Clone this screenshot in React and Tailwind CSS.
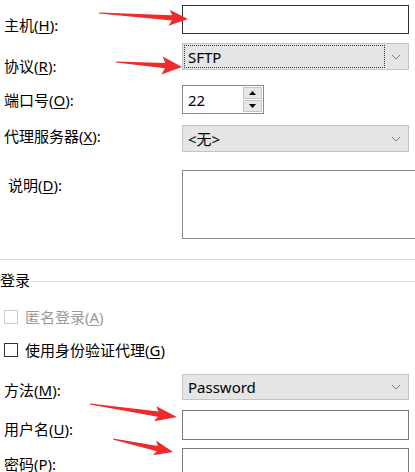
import React from 'react';

const font = "font-['Noto_Sans','Noto_Sans_CJK_SC',sans-serif]";

function Chevron() {
  return (
    <svg width="10" height="6" viewBox="0 0 10 6" className="shrink-0">
      <polyline points="1,1 5,5 9,1" fill="none" stroke="#7a7a7a" strokeWidth="1" />
    </svg>
  );
}

function Label({ text, hot, pt, pl = 'pl-[4px]' }) {
  const i = text.indexOf('(');
  return (
    <div className={`w-[182px] shrink-0 leading-[20px] text-[15px] text-black whitespace-nowrap ${pt} ${pl}`}>
      {text.slice(0, i)}(<span className="underline underline-offset-2">{hot}</span>):
    </div>
  );
}

function Combo({ value, focused }) {
  return (
    <div className="w-[227px] h-full bg-[#e5e5e5] border border-[#c4c4c4] flex items-center pl-[1px] pr-[7px]">
      <div className={`flex-1 h-[calc(100%-2px)] flex items-center pl-[3px] ${focused ? 'border border-dotted border-[#333]' : 'border border-transparent'}`}>
        <span className="text-[15px] leading-[20px] text-black">{value}</span>
      </div>
      <div className="w-[16px] flex justify-end">
        <Chevron />
      </div>
    </div>
  );
}

function Arrow({ tail, tip, len, wing }) {
  const dx = tip[0] - tail[0];
  const dy = tip[1] - tail[1];
  const d = Math.hypot(dx, dy);
  const ux = dx / d;
  const uy = dy / d;
  const nx = -uy;
  const ny = ux;
  const bx = tip[0] - ux * len;
  const by = tip[1] - uy * len;
  const wx = bx - ux * 3;
  const wy = by - uy * 3;
  const p = (x, y) => `${x.toFixed(1)},${y.toFixed(1)}`;
  const pts = [
    p(tail[0] + nx * 0.6, tail[1] + ny * 0.6),
    p(bx + nx * 2.6, by + ny * 2.6),
    p(wx + nx * wing, wy + ny * wing),
    p(tip[0], tip[1]),
    p(wx - nx * wing, wy - ny * wing),
    p(bx - nx * 2.6, by - ny * 2.6),
    p(tail[0] - nx * 0.6, tail[1] - ny * 0.6),
  ].join(' ');
  return <polygon points={pts} fill="#ee2b2b" />;
}

export default function App() {
  return (
    <div className={`relative w-[415px] h-[472px] overflow-hidden bg-white ${font}`}>
      <div className="flex flex-col">
        {/* host */}
        <div className="flex h-[29px] mt-[5px]">
          <Label text="主机(H):" hot="H" pt="pt-[10px]" />
          <div className="w-[227px] h-full border border-[#333]" />
        </div>
        {/* protocol */}
        <div className="flex h-[27px] mt-[9px]">
          <Label text="协议(R):" hot="R" pt="pt-[13px]" />
          <Combo value="SFTP" focused />
        </div>
        {/* port */}
        <div className="flex h-[29px] mt-[15px]">
          <Label text="端口号(O):" hot="O" pt="pt-[5px]" />
          <div className="w-[82px] h-full border border-[#8a8a8a] flex items-center pl-[5px] pr-[1px]">
            <span className="flex-1 text-[15px] leading-[20px] text-black">22</span>
            <div className="flex flex-col gap-[1px] w-[19px]">
              <div className="h-[12px] bg-[#e6e6e6] border border-[#c4c4c4] flex items-center justify-center">
                <svg width="7" height="4" viewBox="0 0 7 4"><polygon points="0,4 3.5,0 7,4" fill="#000" /></svg>
              </div>
              <div className="h-[12px] bg-[#e6e6e6] border border-[#c4c4c4] flex items-center justify-center">
                <svg width="7" height="4" viewBox="0 0 7 4"><polygon points="0,0 3.5,4 7,0" fill="#000" /></svg>
              </div>
            </div>
          </div>
        </div>
        {/* proxy */}
        <div className="flex h-[27px] mt-[11px]">
          <Label text="代理服务器(X):" hot="X" pt="pt-[1px]" />
          <Combo value="<无>" />
        </div>
        {/* description */}
        <div className="flex h-[69px] mt-[18px]">
          <Label text="说明(D):" hot="D" pt="pt-[5px]" pl="pl-[8px]" />
          <div className="w-[240px] shrink-0 h-full border border-[#8a8a8a]" />
        </div>
        {/* separator */}
        <div className="h-px bg-[#dcdcdc] mt-[20px]" />
        {/* group title */}
        <div className="flex h-[20px] mt-[10px]">
          <span className="w-[31px] shrink-0 text-[15px] leading-[20px] text-black">登录</span>
          <div className="flex-1 h-px bg-[#dcdcdc] mt-[11px]" />
        </div>
        {/* anonymous */}
        <div className="flex h-[20px] mt-[17px] items-center pl-[4px] gap-[7px]">
          <div className="w-[14px] h-[14px] border border-[#cccccc] bg-white" />
          <span className="text-[15px] leading-[20px] text-[#9a9a9a]">
            匿名登录(<span className="underline underline-offset-2">A</span>)
          </span>
        </div>
        {/* agent */}
        <div className="flex h-[20px] mt-[13px] items-center pl-[4px] gap-[7px]">
          <div className="w-[14px] h-[14px] border border-[#333] bg-white" />
          <span className="text-[15px] leading-[20px] text-black">
            使用身份验证代理(<span className="underline underline-offset-2">G</span>)
          </span>
        </div>
        {/* method */}
        <div className="flex h-[26px] mt-[14px]">
          <Label text="方法(M):" hot="M" pt="pt-[6px]" />
          <Combo value="Password" />
        </div>
        {/* user */}
        <div className="flex h-[30px] mt-[10px]">
          <Label text="用户名(U):" hot="U" pt="pt-[9px]" />
          <div className="w-[227px] h-full border border-[#7a7a7a]" />
        </div>
        {/* password */}
        <div className="flex h-[30px] mt-[8px]">
          <Label text="密码(P):" hot="P" pt="pt-[6px]" />
          <div className="w-[227px] h-full border border-[#7a7a7a]" />
        </div>
      </div>

      <svg className="absolute inset-0 pointer-events-none" width="415" height="472" viewBox="0 0 415 472">
        <Arrow tail={[99, 13]} tip={[188, 19]} len={16} wing={8} />
        <Arrow tail={[116, 62]} tip={[182, 67]} len={17} wing={9} />
        <Arrow tail={[90, 404]} tip={[177, 417]} len={19} wing={7.5} />
        <Arrow tail={[113, 439]} tip={[173, 452]} len={16} wing={7.5} />
      </svg>
    </div>
  );
}
